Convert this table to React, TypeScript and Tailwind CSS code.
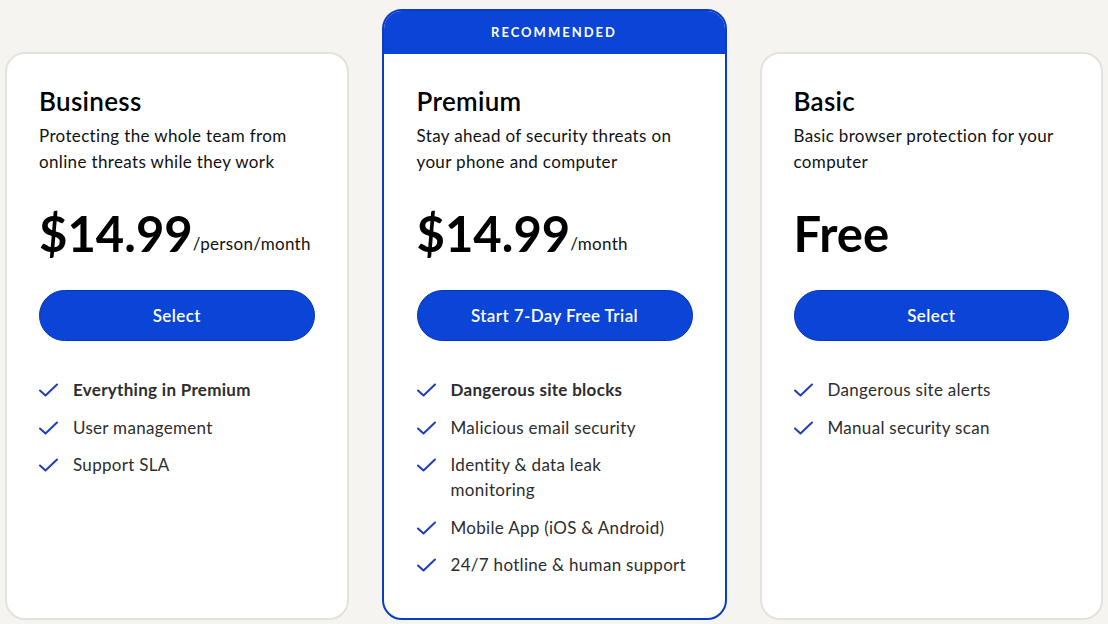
import { ReactNode } from 'react';

type Plan = {
  name: string;
  desc: string;
  price: string;
  unit?: string;
  cta: string;
  features: string[];
  recommended?: boolean;
};

const plans: Plan[] = [
  {
    name: 'Business',
    desc: 'Protecting the whole team from online threats while they work',
    price: '$14.99',
    unit: '/person/month',
    cta: 'Select',
    features: ['Everything in Premium', 'User management', 'Support SLA'],
  },
  {
    name: 'Premium',
    desc: 'Stay ahead of security threats on your phone and computer',
    price: '$14.99',
    unit: '/month',
    cta: 'Start 7-Day Free Trial',
    features: [
      'Dangerous site blocks',
      'Malicious email security',
      'Identity & data leak\nmonitoring',
      'Mobile App (iOS & Android)',
      '24/7 hotline & human support',
    ],
    recommended: true,
  },
  {
    name: 'Basic',
    desc: 'Basic browser protection for your computer',
    price: 'Free',
    cta: 'Select',
    features: ['Dangerous site alerts', 'Manual security scan'],
  },
];

function Check() {
  return (
    <svg width="19" height="14" viewBox="0 0 19 14" className="shrink-0 mt-[6px]">
      <path d="M1 7.5 L6.5 12.5 L18 1.5" fill="none" stroke="#1f3fb8" strokeWidth="2" strokeLinecap="round" strokeLinejoin="round" />
    </svg>
  );
}

function Body({ plan }: { plan: Plan }) {
  return (
    <div className={`${plan.recommended ? 'pl-[33px] pr-[32px]' : 'px-[32px]'} pt-[32px]`}>
      <h2 className="text-[26px] leading-[30px] font-semibold text-black tracking-[0.3px]">{plan.name}</h2>
      <p className="mt-[7px] text-[17px] leading-[26px] text-[#111] tracking-[0.35px] pr-2">{plan.desc}</p>
      <div className="mt-[30px] flex items-baseline h-[56px]">
        <span className="text-[49px] leading-[56px] font-bold text-black">{plan.price}</span>
        {plan.unit && <span className="text-[17px] text-[#111] tracking-[0.3px] relative -top-[2px]">{plan.unit}</span>}
      </div>
      <button className="mt-[29px] w-full h-[51px] rounded-full bg-[#0a45d8] border border-[#0534b0] text-white text-[17px] font-semibold tracking-[0.4px]">
        {plan.cta}
      </button>
      <ul className="mt-[36px] flex flex-col gap-[12.5px]">
        {plan.features.map((f, i) => (
          <li key={f} className="flex gap-[15px]">
            <Check />
            <span
              className={`whitespace-pre-line text-[17px] leading-[25px] text-[#2d2d2d] tracking-[0.3px] ${
                i === 0 && plan.name !== 'Basic' ? 'font-bold' : ''
              }`}
            >
              {f}
            </span>
          </li>
        ))}
      </ul>
    </div>
  );
}

function Card({ plan }: { plan: Plan }): ReactNode {
  if (plan.recommended) {
    return (
      <div className="w-[345px] shrink-0 h-[611px] rounded-[20px] border-2 border-[#0a3cc6] bg-white overflow-hidden flex flex-col">
        <div className="h-[43px] shrink-0 bg-[#0a45d8] flex items-center justify-center text-white text-[13px] font-bold tracking-[2px]">
          RECOMMENDED
        </div>
        <Body plan={plan} />
      </div>
    );
  }
  return (
    <div className="flex-1 h-[568px] rounded-[20px] border-2 border-[#e3e2df] bg-white">
      <Body plan={plan} />
    </div>
  );
}

export default function App() {
  return (
    <div
      className="w-[1108px] h-[624px] bg-[#f5f4f1] flex items-end gap-[33px] px-[5px] pb-[4px]"
      style={{ fontFamily: 'Lato, "Noto Sans", sans-serif' }}
    >
      {plans.map((p) => (
        <Card key={p.name} plan={p} />
      ))}
    </div>
  );
}
